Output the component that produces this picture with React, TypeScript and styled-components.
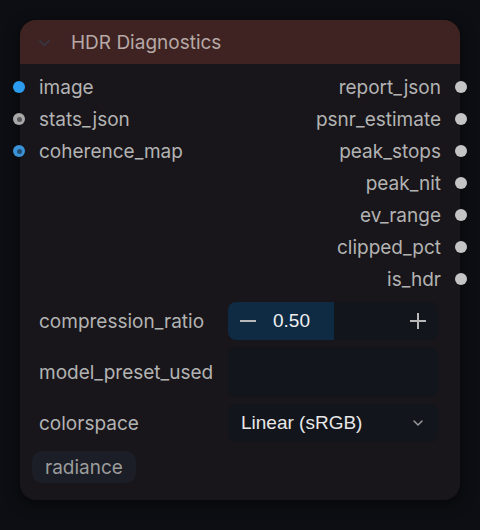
import React from 'react';
import styled, { createGlobalStyle } from 'styled-components';

const GlobalStyle = createGlobalStyle`
  html, body {
    margin: 0;
    padding: 0;
    background: #0c0e13;
  }
  body {
    font-family: Inter, "Liberation Sans", sans-serif;
  }
`;

const Page = styled.div`
  width: 480px;
  height: 530px;
  padding: 20px;
  box-sizing: border-box;
  background: #0c0e13;
`;

const Node = styled.div`
  width: 440px;
  height: 480px;
  background: #18161a;
  border-radius: 16px;
  box-shadow: 0 4px 14px rgba(0, 0, 0, 0.5);
`;

const Header = styled.div`
  height: 44px;
  display: flex;
  align-items: center;
  gap: 19px;
  padding-left: 17px;
  background: #3e2322;
  border-radius: 16px 16px 0 0;
  color: #b6a9a6;
  font-size: 19px;
`;

const Chevron = styled.svg`
  width: 15px;
  height: 15px;
  margin-top: 1px;
`;

const Slots = styled.div`
  display: grid;
  grid-template-columns: 1fr 1fr;
  padding-top: 7px;
`;

const SlotColumn = styled.div<{ $side: 'in' | 'out' }>`
  display: flex;
  flex-direction: column;
  align-items: ${(p) => (p.$side === 'in' ? 'flex-start' : 'flex-end')};
`;

const Slot = styled.div<{ $side: 'in' | 'out' }>`
  position: relative;
  height: 32px;
  display: flex;
  align-items: center;
  color: #b3b3b3;
  font-size: 19px;
  white-space: nowrap;
  padding: ${(p) => (p.$side === 'in' ? '0 0 0 19px' : '0 19px 0 0')};
`;

const Dot = styled.span<{ $side: 'in' | 'out'; $color: string; $hollow?: boolean }>`
  position: absolute;
  top: 50%;
  ${(p) => (p.$side === 'in' ? 'left: -7px;' : 'right: -7px;')}
  width: 12px;
  height: 12px;
  margin-top: -6px;
  border-radius: 50%;
  background: ${(p) => p.$color};
  box-sizing: border-box;
  &::after {
    content: '';
    display: ${(p) => (p.$hollow ? 'block' : 'none')};
    position: absolute;
    left: 3.5px;
    top: 3.5px;
    width: 5px;
    height: 5px;
    border-radius: 50%;
    background: rgba(20, 20, 30, 0.55);
  }
`;

const Widgets = styled.div`
  display: flex;
  flex-direction: column;
  gap: 7px;
  padding: 7px 22px 0 19px;
`;

const WidgetRow = styled.div<{ $h: number }>`
  display: grid;
  grid-template-columns: 189px 210px;
  align-items: center;
  height: ${(p) => p.$h}px;
`;

const Label = styled.div`
  color: #b3b3b3;
  font-size: 19px;
  white-space: nowrap;
`;

const Field = styled.div`
  height: 100%;
  background: #12151b;
  border-radius: 8px;
  display: flex;
  align-items: center;
  overflow: hidden;
  color: #e8e8e8;
  font-family: "Liberation Sans", Arial, sans-serif;
  font-size: 19px;
`;

const NumberFill = styled.div`
  width: 106px;
  height: 100%;
  background: #0f2a43;
  display: flex;
  align-items: center;
`;

const StepButton = styled.span`
  width: 40px;
  display: flex;
  justify-content: center;
  align-items: center;
  color: #b8b8b8;
`;

const NumberValue = styled.span`
  margin-left: 5px;
  color: #f0f0f0;
`;

const Spacer = styled.div`
  flex: 1;
`;

const SelectText = styled.span`
  flex: 1;
  padding-left: 13px;
`;

const Badge = styled.div`
  align-self: flex-start;
  margin: 2px 0 0 -7px;
  padding: 0 13px;
  height: 32px;
  display: flex;
  align-items: center;
  background: #1b1e26;
  border-radius: 10px;
  color: #9c9c9c;
  font-size: 19px;
`;

const inputs = [
  { name: 'image', color: '#2c9cf0' },
  { name: 'stats_json', color: '#a9a9a9', hollow: true },
  { name: 'coherence_map', color: '#3a92d8', hollow: true },
];

const outputs = ['report_json', 'psnr_estimate', 'peak_stops', 'peak_nit', 'ev_range', 'clipped_pct', 'is_hdr'];

export default function App() {
  return (
    <Page>
      <GlobalStyle />
      <Node>
        <Header>
          <Chevron viewBox="0 0 16 16" fill="none" stroke="#3a3440" strokeWidth="2" strokeLinecap="round">
            <path d="M3 6l5 5 5-5" />
          </Chevron>
          HDR Diagnostics
        </Header>
        <Slots>
          <SlotColumn $side="in">
            {inputs.map((s) => (
              <Slot key={s.name} $side="in">
                <Dot $side="in" $color={s.color} $hollow={s.hollow} />
                {s.name}
              </Slot>
            ))}
          </SlotColumn>
          <SlotColumn $side="out">
            {outputs.map((name) => (
              <Slot key={name} $side="out">
                {name}
                <Dot $side="out" $color="#c4c4c4" />
              </Slot>
            ))}
          </SlotColumn>
        </Slots>
        <Widgets>
          <WidgetRow $h={38}>
            <Label>compression_ratio</Label>
            <Field>
              <NumberFill>
                <StepButton>
                  <svg width="18" height="18" viewBox="0 0 18 18" stroke="#b8b8b8" strokeWidth="2">
                    <path d="M1 9h16" />
                  </svg>
                </StepButton>
                <NumberValue>0.50</NumberValue>
              </NumberFill>
              <Spacer />
              <StepButton>
                <svg width="18" height="18" viewBox="0 0 18 18" stroke="#b8b8b8" strokeWidth="2">
                  <path d="M1 9h16M9 1v16" />
                </svg>
              </StepButton>
            </Field>
          </WidgetRow>
          <WidgetRow $h={50}>
            <Label>model_preset_used</Label>
            <Field />
          </WidgetRow>
          <WidgetRow $h={38}>
            <Label>colorspace</Label>
            <Field>
              <SelectText>Linear (sRGB)</SelectText>
              <StepButton>
                <svg width="14" height="14" viewBox="0 0 14 14" fill="none" stroke="#9a9a9a" strokeWidth="1.5" strokeLinecap="round">
                  <path d="M3 5l4 4 4-4" />
                </svg>
              </StepButton>
            </Field>
          </WidgetRow>
          <Badge>radiance</Badge>
        </Widgets>
      </Node>
    </Page>
  );
}
